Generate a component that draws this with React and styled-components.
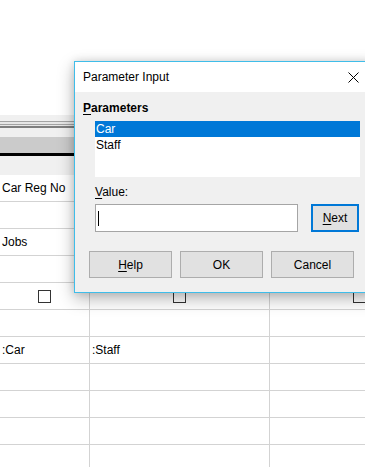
import React from 'react';
import styled, { createGlobalStyle } from 'styled-components';

const UI_FONT = "'Liberation Sans', 'Noto Sans', Arial, sans-serif";

const GlobalStyle = createGlobalStyle`
  html, body {
    margin: 0;
    padding: 0;
    background: #ffffff;
  }
  body {
    font-family: ${UI_FONT};
    font-size: 12px;
    color: #000000;
  }
  * {
    box-sizing: border-box;
  }
`;

const Page = styled.div`
  position: relative;
  width: 365px;
  height: 467px;
  overflow: hidden;
  display: flex;
  flex-direction: column;
  background: #ffffff;
`;

const TablePane = styled.div`
  height: 115px;
  flex-shrink: 0;
  background: #ffffff;
`;

const Splitter = styled.div`
  height: 22px;
  flex-shrink: 0;
  padding-top: 6px;
  background: #f0f0f0;
`;

const SplitRail = styled.div`
  height: 7px;
  border-top: 1px solid #a3a3a3;
  border-bottom: 2px solid #7e7e7e;
  background: linear-gradient(
    to bottom,
    #e6e6e6 0,
    #e6e6e6 2px,
    #a3a3a3 2px,
    #a3a3a3 3px,
    #e6e6e6 3px
  );
`;

const HeaderBar = styled.div`
  height: 19px;
  flex-shrink: 0;
  background: #cbcbcb;
  border-bottom: 3px solid #000000;
`;

const HeaderGap = styled.div`
  height: 19px;
  flex-shrink: 0;
  background: #f0f0f0;
`;

const Grid = styled.div`
  display: flex;
  flex-direction: column;
`;

const Row = styled.div`
  display: flex;
  height: 27px;
  flex-shrink: 0;
  border-bottom: 1px solid #d3d3d3;
`;

const Cell = styled.div`
  width: ${(p) => p.$width}px;
  flex: 0 0 auto;
  display: flex;
  align-items: center;
  justify-content: ${(p) => (p.$center ? 'center' : 'flex-start')};
  padding-left: ${(p) => (p.$center ? 0 : 2)}px;
  border-right: 1px solid #d3d3d3;
  white-space: nowrap;
  overflow: hidden;
`;

const Checkbox = styled.span`
  width: 13px;
  height: 13px;
  border: 1px solid #333333;
  background: #ffffff;
`;

// dialog floats over the query design grid
const Dialog = styled.div`
  position: absolute;
  left: 74px;
  top: 61px;
  width: 303px;
  height: 232px;
  display: flex;
  flex-direction: column;
  background: #f0f0f0;
  border: 1px solid #3fbde9;
  box-shadow: 0 6px 16px rgba(0, 0, 0, 0.28), 0 0 8px rgba(0, 0, 0, 0.12);
`;

const TitleBar = styled.div`
  height: 30px;
  flex-shrink: 0;
  display: flex;
  align-items: center;
  justify-content: space-between;
  padding-left: 8px;
  background: #ffffff;
`;

const Title = styled.span`
  font-size: 12px;
`;

const CloseButton = styled.div`
  width: 46px;
  height: 30px;
  display: flex;
  align-items: center;
  justify-content: center;
`;

const Body = styled.div`
  display: flex;
  flex-direction: column;
  padding: 9px 8px 0 8px;
`;

const GroupLabel = styled.div`
  font-weight: bold;
  line-height: 14px;
`;

const FieldLabel = styled.div`
  line-height: 14px;
  margin: 8px 0 0 12px;
`;

const Mnemonic = styled.span`
  text-decoration: underline;
  text-underline-offset: 2px;
`;

const ListBox = styled.div`
  width: 265px;
  height: 56px;
  margin: 6px 0 0 12px;
  background: #ffffff;
`;

const ListItem = styled.div`
  height: 16px;
  line-height: 16px;
  padding-left: 1px;
  color: ${(p) => (p.$selected ? '#ffffff' : '#000000')};
  background: ${(p) => (p.$selected ? '#0078d7' : 'transparent')};
`;

const InputRow = styled.div`
  display: flex;
  gap: 13px;
  margin: 5px 0 0 12px;
`;

const TextBox = styled.div`
  width: 203px;
  height: 28px;
  display: flex;
  align-items: center;
  padding-left: 2px;
  background: #ffffff;
  border: 1px solid #a5a5a5;
`;

const Caret = styled.span`
  width: 1px;
  height: 15px;
  background: #000000;
`;

const Button = styled.div`
  width: ${(p) => p.$width}px;
  height: ${(p) => p.$height}px;
  display: flex;
  align-items: center;
  justify-content: center;
  background: #e1e1e1;
  border: ${(p) => (p.$default ? '2px solid #0078d7' : '1px solid #adadad')};
`;

const ButtonRow = styled.div`
  display: flex;
  gap: 8px;
  margin: 19px 0 0 6px;
`;

const gridRows = [
  ['Car Reg No', '', ''],
  ['', '', ''],
  ['Jobs', '', ''],
  ['', '', ''],
  'check',
  ['', '', ''],
  [':Car', ':Staff', ''],
  ['', '', ''],
  ['', '', ''],
  ['', '', ''],
  ['', '', ''],
];

const widths = [90, 180, 180];

function CloseIcon() {
  return (
    <svg width="11" height="11" viewBox="0 0 11 11">
      <path d="M0.5 0.5 L10.5 10.5 M10.5 0.5 L0.5 10.5" stroke="#000" strokeWidth="1" fill="none" />
    </svg>
  );
}

export default function App() {
  return (
    <Page>
      <GlobalStyle />
      <TablePane />
      <Splitter>
        <SplitRail />
      </Splitter>
      <HeaderBar />
      <HeaderGap />
      <Grid>
        {gridRows.map((row, i) => (
          <Row key={i}>
            {widths.map((w, j) => (
              <Cell key={j} $width={w} $center={row === 'check'}>
                {row === 'check' ? <Checkbox /> : row[j]}
              </Cell>
            ))}
          </Row>
        ))}
      </Grid>

      <Dialog>
        <TitleBar>
          <Title>Parameter Input</Title>
          <CloseButton>
            <CloseIcon />
          </CloseButton>
        </TitleBar>
        <Body>
          <GroupLabel>
            <Mnemonic>P</Mnemonic>arameters
          </GroupLabel>
          <ListBox>
            <ListItem $selected>Car</ListItem>
            <ListItem>Staff</ListItem>
          </ListBox>
          <FieldLabel>
            <Mnemonic>V</Mnemonic>alue:
          </FieldLabel>
          <InputRow>
            <TextBox>
              <Caret />
            </TextBox>
            <Button $width={48} $height={28} $default>
              <span>
                <Mnemonic>N</Mnemonic>ext
              </span>
            </Button>
          </InputRow>
          <ButtonRow>
            <Button $width={83} $height={27}>
              <span>
                <Mnemonic>H</Mnemonic>elp
              </span>
            </Button>
            <Button $width={83} $height={27}>OK</Button>
            <Button $width={83} $height={27}>Cancel</Button>
          </ButtonRow>
        </Body>
      </Dialog>
    </Page>
  );
}
